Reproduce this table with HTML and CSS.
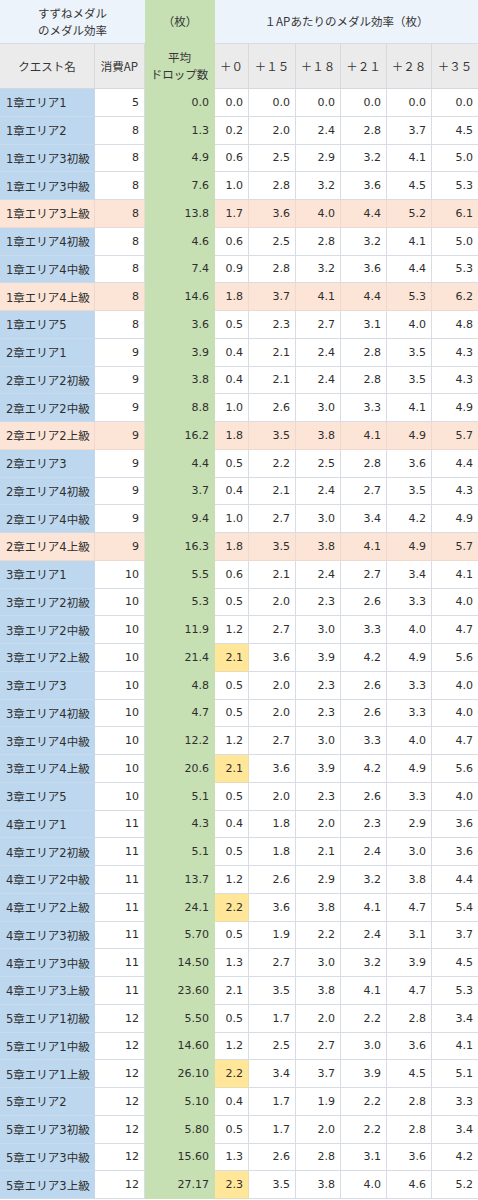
FILE: index.html
```html
<!DOCTYPE html>
<html lang="ja">
<head>
<meta charset="utf-8">
<title>すずねメダルのメダル効率</title>
<link rel="stylesheet" href="styles.css">
</head>
<body>
<div class="sheet">
  <div class="hd top title">すずねメダル<br>のメダル効率</div>
  <div class="hd top g">（枚）</div>
  <div class="hd top eff">１APあたりのメダル効率（枚）</div>

  <div class="hd sub">クエスト名</div>
  <div class="hd sub">消費AP</div>
  <div class="hd sub g">平均<br>ドロップ数</div>
  <div class="hd sub">＋０</div>
  <div class="hd sub">＋１５</div>
  <div class="hd sub">＋１８</div>
  <div class="hd sub">＋２１</div>
  <div class="hd sub">＋２８</div>
  <div class="hd sub last">＋３５</div>

  <div class="row"><span class="q">1章エリア1</span><span>5</span><span class="g">0.0</span><span>0.0</span><span>0.0</span><span>0.0</span><span>0.0</span><span>0.0</span><span>0.0</span></div>
  <div class="row"><span class="q">1章エリア2</span><span>8</span><span class="g">1.3</span><span>0.2</span><span>2.0</span><span>2.4</span><span>2.8</span><span>3.7</span><span>4.5</span></div>
  <div class="row"><span class="q">1章エリア3初級</span><span>8</span><span class="g">4.9</span><span>0.6</span><span>2.5</span><span>2.9</span><span>3.2</span><span>4.1</span><span>5.0</span></div>
  <div class="row"><span class="q">1章エリア3中級</span><span>8</span><span class="g">7.6</span><span>1.0</span><span>2.8</span><span>3.2</span><span>3.6</span><span>4.5</span><span>5.3</span></div>
  <div class="row hl"><span class="q">1章エリア3上級</span><span>8</span><span class="g">13.8</span><span>1.7</span><span>3.6</span><span>4.0</span><span>4.4</span><span>5.2</span><span>6.1</span></div>
  <div class="row"><span class="q">1章エリア4初級</span><span>8</span><span class="g">4.6</span><span>0.6</span><span>2.5</span><span>2.8</span><span>3.2</span><span>4.1</span><span>5.0</span></div>
  <div class="row"><span class="q">1章エリア4中級</span><span>8</span><span class="g">7.4</span><span>0.9</span><span>2.8</span><span>3.2</span><span>3.6</span><span>4.4</span><span>5.3</span></div>
  <div class="row hl"><span class="q">1章エリア4上級</span><span>8</span><span class="g">14.6</span><span>1.8</span><span>3.7</span><span>4.1</span><span>4.4</span><span>5.3</span><span>6.2</span></div>
  <div class="row"><span class="q">1章エリア5</span><span>8</span><span class="g">3.6</span><span>0.5</span><span>2.3</span><span>2.7</span><span>3.1</span><span>4.0</span><span>4.8</span></div>
  <div class="row"><span class="q">2章エリア1</span><span>9</span><span class="g">3.9</span><span>0.4</span><span>2.1</span><span>2.4</span><span>2.8</span><span>3.5</span><span>4.3</span></div>
  <div class="row"><span class="q">2章エリア2初級</span><span>9</span><span class="g">3.8</span><span>0.4</span><span>2.1</span><span>2.4</span><span>2.8</span><span>3.5</span><span>4.3</span></div>
  <div class="row"><span class="q">2章エリア2中級</span><span>9</span><span class="g">8.8</span><span>1.0</span><span>2.6</span><span>3.0</span><span>3.3</span><span>4.1</span><span>4.9</span></div>
  <div class="row hl"><span class="q">2章エリア2上級</span><span>9</span><span class="g">16.2</span><span>1.8</span><span>3.5</span><span>3.8</span><span>4.1</span><span>4.9</span><span>5.7</span></div>
  <div class="row"><span class="q">2章エリア3</span><span>9</span><span class="g">4.4</span><span>0.5</span><span>2.2</span><span>2.5</span><span>2.8</span><span>3.6</span><span>4.4</span></div>
  <div class="row"><span class="q">2章エリア4初級</span><span>9</span><span class="g">3.7</span><span>0.4</span><span>2.1</span><span>2.4</span><span>2.7</span><span>3.5</span><span>4.3</span></div>
  <div class="row"><span class="q">2章エリア4中級</span><span>9</span><span class="g">9.4</span><span>1.0</span><span>2.7</span><span>3.0</span><span>3.4</span><span>4.2</span><span>4.9</span></div>
  <div class="row hl"><span class="q">2章エリア4上級</span><span>9</span><span class="g">16.3</span><span>1.8</span><span>3.5</span><span>3.8</span><span>4.1</span><span>4.9</span><span>5.7</span></div>
  <div class="row"><span class="q">3章エリア1</span><span>10</span><span class="g">5.5</span><span>0.6</span><span>2.1</span><span>2.4</span><span>2.7</span><span>3.4</span><span>4.1</span></div>
  <div class="row"><span class="q">3章エリア2初級</span><span>10</span><span class="g">5.3</span><span>0.5</span><span>2.0</span><span>2.3</span><span>2.6</span><span>3.3</span><span>4.0</span></div>
  <div class="row"><span class="q">3章エリア2中級</span><span>10</span><span class="g">11.9</span><span>1.2</span><span>2.7</span><span>3.0</span><span>3.3</span><span>4.0</span><span>4.7</span></div>
  <div class="row"><span class="q">3章エリア2上級</span><span>10</span><span class="g">21.4</span><span class="y">2.1</span><span>3.6</span><span>3.9</span><span>4.2</span><span>4.9</span><span>5.6</span></div>
  <div class="row"><span class="q">3章エリア3</span><span>10</span><span class="g">4.8</span><span>0.5</span><span>2.0</span><span>2.3</span><span>2.6</span><span>3.3</span><span>4.0</span></div>
  <div class="row"><span class="q">3章エリア4初級</span><span>10</span><span class="g">4.7</span><span>0.5</span><span>2.0</span><span>2.3</span><span>2.6</span><span>3.3</span><span>4.0</span></div>
  <div class="row"><span class="q">3章エリア4中級</span><span>10</span><span class="g">12.2</span><span>1.2</span><span>2.7</span><span>3.0</span><span>3.3</span><span>4.0</span><span>4.7</span></div>
  <div class="row"><span class="q">3章エリア4上級</span><span>10</span><span class="g">20.6</span><span class="y">2.1</span><span>3.6</span><span>3.9</span><span>4.2</span><span>4.9</span><span>5.6</span></div>
  <div class="row"><span class="q">3章エリア5</span><span>10</span><span class="g">5.1</span><span>0.5</span><span>2.0</span><span>2.3</span><span>2.6</span><span>3.3</span><span>4.0</span></div>
  <div class="row"><span class="q">4章エリア1</span><span>11</span><span class="g">4.3</span><span>0.4</span><span>1.8</span><span>2.0</span><span>2.3</span><span>2.9</span><span>3.6</span></div>
  <div class="row"><span class="q">4章エリア2初級</span><span>11</span><span class="g">5.1</span><span>0.5</span><span>1.8</span><span>2.1</span><span>2.4</span><span>3.0</span><span>3.6</span></div>
  <div class="row"><span class="q">4章エリア2中級</span><span>11</span><span class="g">13.7</span><span>1.2</span><span>2.6</span><span>2.9</span><span>3.2</span><span>3.8</span><span>4.4</span></div>
  <div class="row"><span class="q">4章エリア2上級</span><span>11</span><span class="g">24.1</span><span class="y">2.2</span><span>3.6</span><span>3.8</span><span>4.1</span><span>4.7</span><span>5.4</span></div>
  <div class="row"><span class="q">4章エリア3初級</span><span>11</span><span class="g">5.70</span><span>0.5</span><span>1.9</span><span>2.2</span><span>2.4</span><span>3.1</span><span>3.7</span></div>
  <div class="row"><span class="q">4章エリア3中級</span><span>11</span><span class="g">14.50</span><span>1.3</span><span>2.7</span><span>3.0</span><span>3.2</span><span>3.9</span><span>4.5</span></div>
  <div class="row"><span class="q">4章エリア3上級</span><span>11</span><span class="g">23.60</span><span>2.1</span><span>3.5</span><span>3.8</span><span>4.1</span><span>4.7</span><span>5.3</span></div>
  <div class="row"><span class="q">5章エリア1初級</span><span>12</span><span class="g">5.50</span><span>0.5</span><span>1.7</span><span>2.0</span><span>2.2</span><span>2.8</span><span>3.4</span></div>
  <div class="row"><span class="q">5章エリア1中級</span><span>12</span><span class="g">14.60</span><span>1.2</span><span>2.5</span><span>2.7</span><span>3.0</span><span>3.6</span><span>4.1</span></div>
  <div class="row"><span class="q">5章エリア1上級</span><span>12</span><span class="g">26.10</span><span class="y">2.2</span><span>3.4</span><span>3.7</span><span>3.9</span><span>4.5</span><span>5.1</span></div>
  <div class="row"><span class="q">5章エリア2</span><span>12</span><span class="g">5.10</span><span>0.4</span><span>1.7</span><span>1.9</span><span>2.2</span><span>2.8</span><span>3.3</span></div>
  <div class="row"><span class="q">5章エリア3初級</span><span>12</span><span class="g">5.80</span><span>0.5</span><span>1.7</span><span>2.0</span><span>2.2</span><span>2.8</span><span>3.4</span></div>
  <div class="row"><span class="q">5章エリア3中級</span><span>12</span><span class="g">15.60</span><span>1.3</span><span>2.6</span><span>2.8</span><span>3.1</span><span>3.6</span><span>4.2</span></div>
  <div class="row"><span class="q">5章エリア3上級</span><span>12</span><span class="g">27.17</span><span class="y">2.3</span><span>3.5</span><span>3.8</span><span>4.0</span><span>4.6</span><span>5.2</span></div>
</div>
</body>
</html>
```

FILE: styles.css
```css
html, body {
  margin: 0;
  padding: 0;
  background: #ffffff;
}

body {
  font-family: "DejaVu Sans", "Noto Sans CJK JP", sans-serif;
  font-size: 11px;
  color: #2e2e2e;
}

.sheet {
  display: grid;
  grid-template-columns: 95px 50px 70px 34px 47px 45px 46px 45px 46px;
  grid-template-rows: 44px 45px repeat(40, 27.75px);
  width: 478px;
}

.hd {
  box-sizing: border-box;
  display: flex;
  align-items: center;
  justify-content: center;
  text-align: center;
  font-family: "Noto Sans CJK JP", sans-serif;
  font-size: 11.5px;
  line-height: 17px;
  color: #353535;
}

.hd.top {
  background: #edf3fb;
  border-bottom: 1px solid #d6dde8;
}

.hd.title {
  grid-column: span 2;
}

.hd.eff {
  grid-column: span 6;
}

.hd.sub {
  background: #ebebeb;
  border-right: 1px solid #d9d9d9;
  border-bottom: 1px solid #d4d8de;
}

.hd.sub.last {
  border-right: none;
}

.hd.g {
  background: #c6e0b4;
  border-color: #c6e0b4;
}

.hd.sub.g {
  border-right-color: #c6e0b4;
  border-bottom-color: #c6e0b4;
}

.row {
  display: contents;
}

.row > span {
  box-sizing: border-box;
  display: flex;
  align-items: center;
  justify-content: flex-end;
  padding-right: 5px;
  background: #ffffff;
  border-right: 1px solid #d8dde5;
  border-bottom: 1px solid #d8dde5;
  white-space: nowrap;
}

.row > span:last-child {
  border-right: none;
}

.row > .q {
  justify-content: flex-start;
  padding-left: 6px;
  padding-right: 0;
  background: #bdd7ee;
  border-bottom-color: #c9dcee;
  border-right-color: #c4d6ea;
  font-size: 11.5px;
}

.row > .g {
  background: #c6e0b4;
  border-color: #c6e0b4;
}

.row.hl > span:not(.g) {
  background: #fce4d6;
  border-color: #ecd9cf;
}

.row.hl > span:last-child {
  border-right: none;
}

.row > .y {
  background: #ffe699;
  border-color: #e9dcaf;
}
```
